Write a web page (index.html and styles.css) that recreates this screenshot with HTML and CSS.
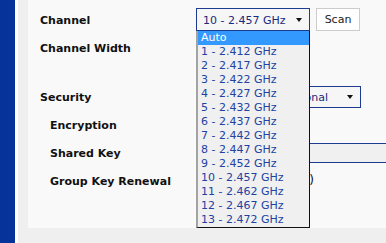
FILE: index.html
```html
<!DOCTYPE html>
<html lang="en">
<head>
    <link rel="stylesheet" href="styles.css">
    <title>Wireless Settings</title>
</head>
<body>
    <div class="page">
        <div class="side"></div>
        <div class="main">
            <div class="panel">
                <div class="row">
                    <div class="label">Channel</div>
                    <div class="field">
                        <div class="select-wrap">
                            <div class="select channel-select">
                                <span>10 - 2.457 GHz</span>
                                <span class="arrow"></span>
                            </div>
                            <ul class="dropdown">
                                <li class="picked">Auto</li>
                                <li>1 - 2.412 GHz</li>
                                <li>2 - 2.417 GHz</li>
                                <li>3 - 2.422 GHz</li>
                                <li>4 - 2.427 GHz</li>
                                <li>5 - 2.432 GHz</li>
                                <li>6 - 2.437 GHz</li>
                                <li>7 - 2.442 GHz</li>
                                <li>8 - 2.447 GHz</li>
                                <li>9 - 2.452 GHz</li>
                                <li>10 - 2.457 GHz</li>
                                <li>11 - 2.462 GHz</li>
                                <li>12 - 2.467 GHz</li>
                                <li>13 - 2.472 GHz</li>
                            </ul>
                        </div>
                        <button class="scan">Scan</button>
                    </div>
                </div>
                <div class="row">
                    <div class="label">Channel Width</div>
                </div>
                <div class="spacer"></div>
                <div class="row">
                    <div class="label">Security</div>
                    <div class="field">
                        <div class="select security-select">
                            <span class="sec-text">onal</span>
                            <span class="arrow"></span>
                        </div>
                    </div>
                </div>
                <div class="row">
                    <div class="label sub">Encryption</div>
                </div>
                <div class="row">
                    <div class="label sub">Shared Key</div>
                    <div class="field">
                        <div class="key-input"></div>
                    </div>
                </div>
                <div class="row">
                    <div class="label sub">Group Key Renewal</div>
                    <div class="field">
                        <div class="renewal">)</div>
                    </div>
                </div>
            </div>
        </div>
    </div>
</body>
</html>
```

FILE: styles.css
```css
* {
    margin: 0;
    padding: 0;
    box-sizing: border-box;
}

body {
    font-family: "DejaVu Sans", Verdana, sans-serif;
    font-size: 11px;
    background-color: #eeeeee;
    overflow: hidden;
}

.page {
    display: flex;
    height: 243px;
}

.side {
    width: 18px;
    background-color: #05339a;
    border-right: 3px solid #ffffff;
}

.main {
    flex: 1;
    background-color: #efefef;
    padding-left: 10px;
    overflow: hidden;
}

.panel {
    background-color: #f9f9f9;
    height: 228px;
    padding: 6px 0 0 12px;
}

.row {
    display: flex;
    align-items: flex-start;
    height: 28px;
}

.spacer {
    height: 21px;
}

.label {
    width: 156px;
    flex-shrink: 0;
    font-weight: bold;
    color: #111111;
    line-height: 28px;
    padding-top: 1px;
}

.label.sub {
    padding-left: 10px;
}

.field {
    display: flex;
    align-items: flex-start;
}

.select-wrap {
    position: relative;
    margin-top: 2px;
}

.select {
    display: flex;
    align-items: center;
    height: 23px;
    border: 1px solid #1d3c8f;
    background-color: #f6f6f6;
    color: #1a2a7c;
    white-space: nowrap;
    overflow: hidden;
}

.channel-select {
    width: 114px;
    padding: 1px 0 0 6px;
}

.arrow {
    width: 0;
    height: 0;
    border-left: 3.5px solid transparent;
    border-right: 3.5px solid transparent;
    border-top: 4px solid #111111;
    margin-left: auto;
}

.channel-select .arrow {
    margin-right: 7px;
}

.security-select {
    width: 165px;
    height: 22px;
    margin-top: 3px;
    justify-content: flex-end;
    padding-right: 7px;
}

.security-select .arrow {
    margin-left: 19px;
}

.dropdown {
    position: absolute;
    top: 23px;
    left: 0;
    width: 114px;
    list-style: none;
    background-color: #f0f0f0;
    border-left: 2px solid #a3a3a3;
    border-right: 1px solid #111111;
    border-bottom: 1px solid #111111;
    z-index: 5;
}

.dropdown li {
    height: 14px;
    line-height: 14px;
    padding-left: 3px;
    color: #2142a3;
}

.dropdown li.picked {
    background-color: #3399ff;
    color: #ffffff;
}

.scan {
    margin: 2px 0 0 6px;
    width: 44px;
    height: 23px;
    border: 1px solid #cccccc;
    background-color: #ffffff;
    font-family: "DejaVu Sans", Verdana, sans-serif;
    font-size: 11px;
    color: #222222;
}

.key-input {
    margin-top: 4px;
    width: 260px;
    height: 20px;
    border-top: 1px solid #1d3c8f;
    border-bottom: 1px solid #1d3c8f;
    background-color: #f0f0f0;
}

.renewal {
    width: 118px;
    text-align: right;
    line-height: 14px;
    margin-top: 6px;
    font-size: 12px;
    color: #111111;
    white-space: nowrap;
}
```
